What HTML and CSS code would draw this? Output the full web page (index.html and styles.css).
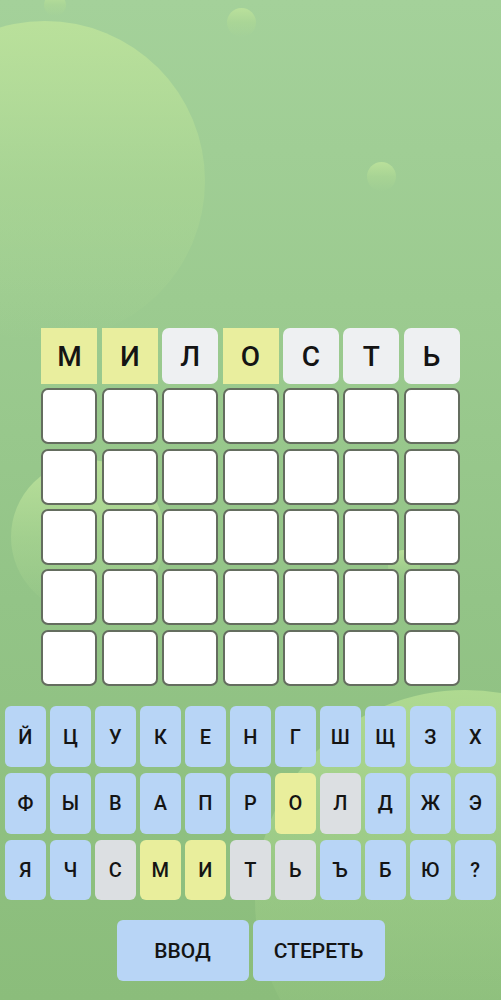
FILE: index.html
```html
<!DOCTYPE html>
<html lang="ru">
<head>
<meta charset="utf-8">
<title>Слова</title>
<link rel="stylesheet" href="styles.css">
</head>
<body>
<div class="app">
  <div class="bubbles" aria-hidden="true">
    <span class="bubble b-big"></span>
    <span class="bubble b-s1"></span>
    <span class="bubble b-s2"></span>
    <span class="bubble b-s3"></span>
    <span class="bubble b-left"></span>
    <span class="bubble b-mid"></span>
    <span class="bubble b-right"></span>
  </div>
  <main class="content">
    <section class="board">
      <div class="cell filled present">М</div>
      <div class="cell filled present">И</div>
      <div class="cell filled absent">Л</div>
      <div class="cell filled present">О</div>
      <div class="cell filled absent">С</div>
      <div class="cell filled absent">Т</div>
      <div class="cell filled absent">Ь</div>
      <div class="cell"></div><div class="cell"></div><div class="cell"></div><div class="cell"></div><div class="cell"></div><div class="cell"></div><div class="cell"></div>
      <div class="cell"></div><div class="cell"></div><div class="cell"></div><div class="cell"></div><div class="cell"></div><div class="cell"></div><div class="cell"></div>
      <div class="cell"></div><div class="cell"></div><div class="cell"></div><div class="cell"></div><div class="cell"></div><div class="cell"></div><div class="cell"></div>
      <div class="cell"></div><div class="cell"></div><div class="cell"></div><div class="cell"></div><div class="cell"></div><div class="cell"></div><div class="cell"></div>
      <div class="cell"></div><div class="cell"></div><div class="cell"></div><div class="cell"></div><div class="cell"></div><div class="cell"></div><div class="cell"></div>
    </section>
    <section class="keyboard">
      <button class="key">Й</button><button class="key">Ц</button><button class="key">У</button><button class="key">К</button><button class="key">Е</button><button class="key">Н</button><button class="key">Г</button><button class="key">Ш</button><button class="key">Щ</button><button class="key">З</button><button class="key">Х</button>
      <button class="key">Ф</button><button class="key">Ы</button><button class="key">В</button><button class="key">А</button><button class="key">П</button><button class="key">Р</button><button class="key k-present">О</button><button class="key k-absent">Л</button><button class="key">Д</button><button class="key">Ж</button><button class="key">Э</button>
      <button class="key">Я</button><button class="key">Ч</button><button class="key k-absent">С</button><button class="key k-present">М</button><button class="key k-present">И</button><button class="key k-absent">Т</button><button class="key k-absent">Ь</button><button class="key">Ъ</button><button class="key">Б</button><button class="key">Ю</button><button class="key">?</button>
    </section>
    <section class="actions">
      <button class="action">ВВОД</button>
      <button class="action">СТЕРЕТЬ</button>
    </section>
  </main>
</div>
</body>
</html>
```

FILE: styles.css
```css
html, body {
  margin: 0;
  padding: 0;
}

body {
  font-family: Roboto, "Noto Sans", "Liberation Sans", sans-serif;
  color: #141414;
}

.app {
  position: relative;
  width: 501px;
  height: 1000px;
  overflow: hidden;
  background: linear-gradient(180deg, #a4d19a 0%, #9ccb90 30%, #93c487 60%, #8bbd7b 100%);
}

.bubbles {
  position: absolute;
  inset: 0;
  pointer-events: none;
}

.bubble {
  position: absolute;
  border-radius: 50%;
  background: linear-gradient(180deg, rgba(188, 226, 155, 0.9) 0%, rgba(176, 218, 148, 0.5) 50%, rgba(160, 205, 140, 0) 100%);
}

.b-big {
  left: -115px;
  top: 21px;
  width: 320px;
  height: 320px;
}

.b-s1 {
  left: 44px;
  top: -6px;
  width: 22px;
  height: 22px;
}

.b-s2 {
  left: 227px;
  top: 8px;
  width: 29px;
  height: 29px;
}

.b-s3 {
  left: 367px;
  top: 162px;
  width: 29px;
  height: 29px;
}

.b-left {
  left: 11px;
  top: 460px;
  width: 154px;
  height: 154px;
}

.b-mid {
  left: 388px;
  top: 550px;
  width: 32px;
  height: 32px;
}

.b-right {
  left: 255px;
  top: 690px;
  width: 420px;
  height: 420px;
  background: linear-gradient(180deg, rgba(178, 220, 146, 0.9) 0%, rgba(165, 210, 140, 0.45) 45%, rgba(150, 195, 130, 0) 90%);
}

.content {
  position: relative;
  display: flex;
  flex-direction: column;
  align-items: center;
  padding-top: 328px;
}

.board {
  display: grid;
  grid-template-columns: repeat(7, 56px);
  grid-auto-rows: 56px;
  gap: 4.35px;
}

.cell {
  box-sizing: border-box;
  border: 2px solid #646d5f;
  border-radius: 7px;
  background: #ffffff;
  display: flex;
  align-items: center;
  justify-content: center;
  font-size: 28px;
  font-weight: 500;
}

.cell.filled {
  border: none;
}

.cell.present {
  background: #e9ee9e;
  border-radius: 0;
}

.cell.absent {
  background: #eef0f2;
  border-radius: 7px;
}

.keyboard {
  align-self: flex-start;
  margin: 20.5px 0 0 4.7px;
  display: grid;
  grid-template-columns: repeat(11, 41.4px);
  grid-auto-rows: 60.7px;
  column-gap: 3.6px;
  row-gap: 6px;
}

.key, .action {
  border: none;
  padding: 0;
  margin: 0;
  font-family: Roboto, "Noto Sans", "Liberation Sans", sans-serif;
  color: #141414;
  background: #b8d5f6;
  border-radius: 6px;
}

.key {
  font-size: 20px;
  font-weight: 500;
}

.key.k-present {
  background: #e9ee9c;
}

.key.k-absent {
  background: #dcdfe2;
}

.actions {
  margin-top: 20px;
  display: flex;
  gap: 4px;
}

.action {
  width: 132px;
  height: 61px;
  font-size: 21px;
  font-weight: 500;
}
```
